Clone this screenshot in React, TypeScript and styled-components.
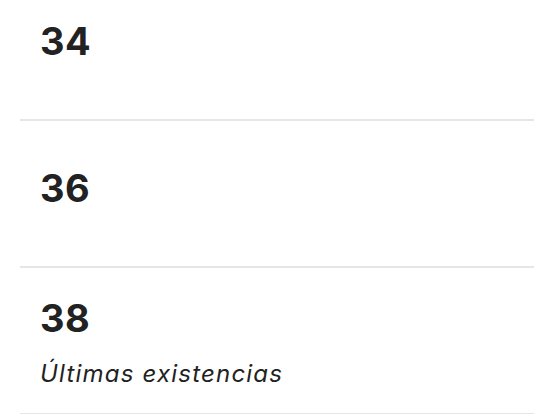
import React from 'react'
import styled, { createGlobalStyle } from 'styled-components'

const GlobalStyle = createGlobalStyle`
    html, body {
        margin: 0;
        padding: 0;
        background: #fff;
    }
    body {
        font-family: Inter, 'Liberation Sans', sans-serif;
        color: #222;
    }
`

const Page = styled.div`
    width: 534px;
    height: 414px;
    overflow: hidden;
`

const SizeList = styled.ul`
    list-style: none;
    margin: -26px 0 0 20px;
    padding: 0;
`

const SizeRow = styled.li<{ $hasNote?: boolean }>`
    display: flex;
    flex-direction: column;
    height: 147px;
    padding: ${({ $hasNote }) => ($hasNote ? '27px' : '44px')} 0 0 20px;
    border-bottom: 2px solid #e6e6e6;
    box-sizing: border-box;
`

const SizeLabel = styled.span`
    font-size: 38px;
    font-weight: 700;
    line-height: 46px;
    letter-spacing: 0.5px;
`

const StockNote = styled.span`
    margin-top: 18px;
    font-size: 24px;
    font-style: italic;
    line-height: 30px;
    letter-spacing: 1.2px;
`

interface Size {
    label: string
    note?: string
}

const sizes: Size[] = [
    { label: '34' },
    { label: '36' },
    { label: '38', note: 'Últimas existencias' },
]

const App = () => (
    <Page>
        <GlobalStyle />
        <SizeList>
            {sizes.map((size) => (
                <SizeRow key={size.label} $hasNote={!!size.note}>
                    <SizeLabel>{size.label}</SizeLabel>
                    {size.note ? <StockNote>{size.note}</StockNote> : null}
                </SizeRow>
            ))}
        </SizeList>
    </Page>
)

export default App
